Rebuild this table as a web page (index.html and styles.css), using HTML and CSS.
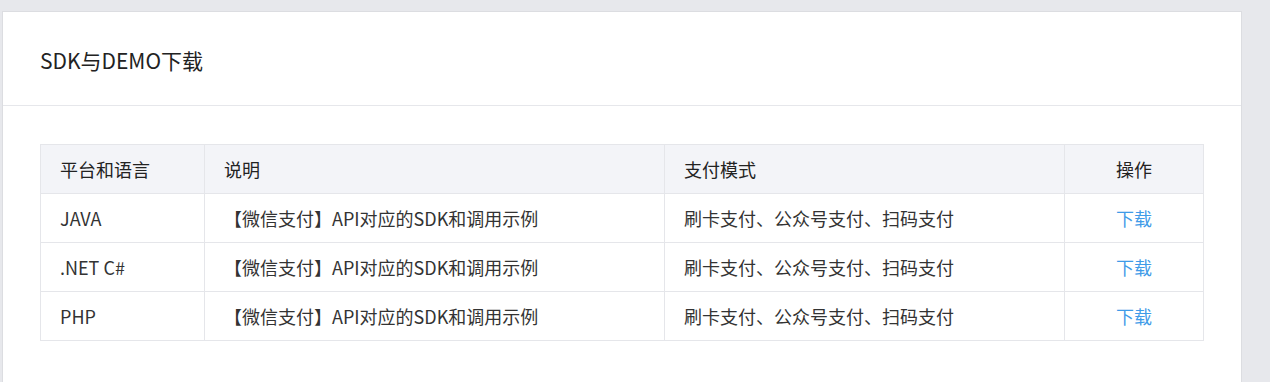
FILE: index.html
```html
<!DOCTYPE html>
<html lang="zh-CN">
<head>
<meta charset="utf-8">
<link rel="stylesheet" href="styles.css">
</head>
<body>
<div class="page">
  <div class="card">
    <div class="card-head">SDK与DEMO下载</div>
    <div class="card-body">
      <table class="sdk">
        <thead>
          <tr>
            <th class="c1">平台和语言</th>
            <th class="c2">说明</th>
            <th class="c3">支付模式</th>
            <th class="c4">操作</th>
          </tr>
        </thead>
        <tbody>
          <tr>
            <td>JAVA</td>
            <td>【微信支付】API对应的SDK和调用示例</td>
            <td>刷卡支付、公众号支付、扫码支付</td>
            <td class="op"><a href="#">下载</a></td>
          </tr>
          <tr>
            <td>.NET C#</td>
            <td>【微信支付】API对应的SDK和调用示例</td>
            <td>刷卡支付、公众号支付、扫码支付</td>
            <td class="op"><a href="#">下载</a></td>
          </tr>
          <tr>
            <td>PHP</td>
            <td>【微信支付】API对应的SDK和调用示例</td>
            <td>刷卡支付、公众号支付、扫码支付</td>
            <td class="op"><a href="#">下载</a></td>
          </tr>
        </tbody>
      </table>
    </div>
  </div>
</div>
</body>
</html>
```

FILE: styles.css
```css
html, body {
  margin: 0;
  padding: 0;
  background: #e7e8ec;
  font-family: "Noto Sans CJK SC", "Noto Sans", sans-serif;
  color: #333;
}
.page {
  padding: 11px 0 0 2px;
  height: 371px;
  overflow: hidden;
}
.card {
  width: 1240px;
  box-sizing: border-box;
  background: #fff;
  border: 1px solid #dcdde1;
  min-height: 400px;
}
.card-head {
  height: 94px;
  box-sizing: border-box;
  padding: 2px 0 0 37px;
  display: flex;
  align-items: center;
  font-size: 21px;
  color: #222;
  border-bottom: 1px solid #e6e7eb;
}
.card-body {
  padding: 38px 37px 0 37px;
}
.sdk {
  width: 1163px;
  border-collapse: collapse;
  font-size: 18px;
  table-layout: fixed;
}
.sdk th, .sdk td {
  border: 1px solid #e5e6ea;
  height: 48px;
  padding: 0 0 0 19px;
  text-align: left;
  font-weight: normal;
  line-height: 48px;
  box-sizing: border-box;
  white-space: nowrap;
}
.sdk th {
  background: #f3f4f8;
  color: #222;
}
.sdk td {
  color: #333;
}
.sdk .c1 { width: 164px; }
.sdk .c2 { width: 460px; }
.sdk .c3 { width: 400px; }
.sdk .c4 { width: 139px; text-align: center; padding: 0; }
.sdk td.op { text-align: center; padding: 0; }
.sdk td.op a {
  color: #3f9be8;
  text-decoration: none;
}
```
